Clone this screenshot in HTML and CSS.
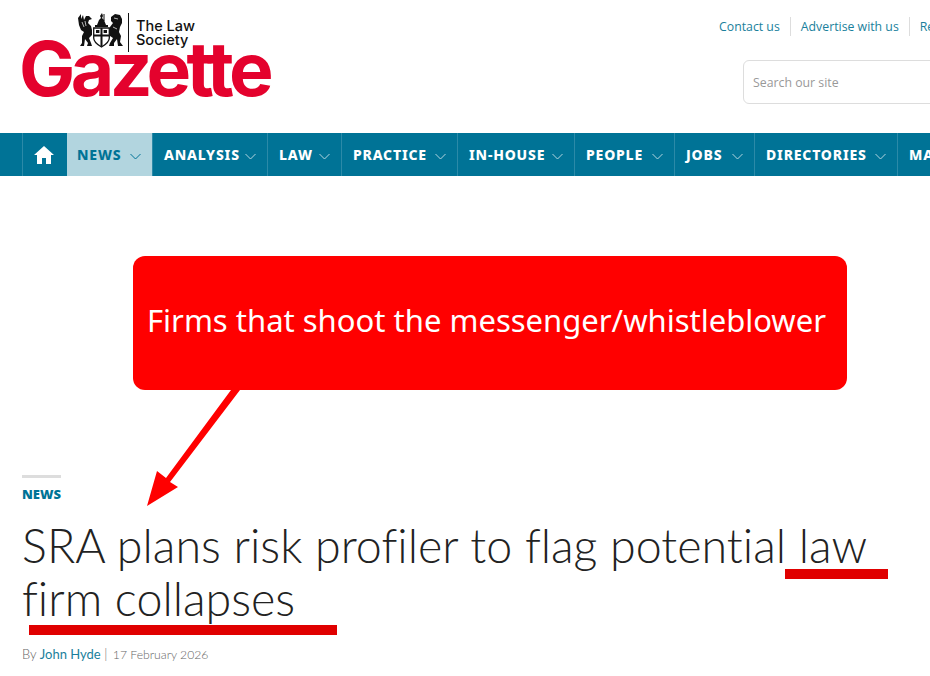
FILE: index.html
```html
<!DOCTYPE html>
<html lang="en">
<head>
    <meta charset="UTF-8">
    <title>SRA plans risk profiler to flag potential law firm collapses</title>
    <meta name="viewport" content="width=device-width, initial-scale=1.0">
    <link rel="stylesheet" href="styles.css">
</head>
<body>
    <div class="page">
        <header class="masthead">
            <a class="logo" href="#">
                <div class="logo-top">
                    <svg class="crest" width="46" height="36" viewBox="0 0 46 36" aria-hidden="true">
                        <!-- griffin -->
                        <path d="M0 5 L3 1 L3 6 L5 2 L6 7 L8 3 L11 3 L14 6 L11 7 L10 10 L13 13 L14 17 L14 22 L11 25 L13 30 L14 33 L9 33 L10 30 L7 26 L6 33 L2 33 L4 30 L4 23 L6 19 L3 17 L1 12 Z" fill="#111"/>
                        <path d="M4 9 L6 14 M7 8 L8 13" stroke="#fff" stroke-width=".7"/>
                        <!-- lion -->
                        <path d="M44 6 L42 2 L37 1 L33 4 L33 8 L35 10 L32 14 L31 18 L32 23 L35 25 L32 30 L31 33 L36 33 L36 30 L39 26 L40 33 L45 33 L42 29 L43 23 L41 19 L42 14 L44 10 Z" fill="#111"/>
                        <path d="M36 5 L40 6 M35 14 L39 16" stroke="#fff" stroke-width=".7"/>
                        <!-- figure on top -->
                        <path d="M24 0 L25 3 L24 5 L26 7 L28 12 L19 12 L21 7 L23 5 L22 3 Z" fill="#111"/>
                        <path d="M26 1 V8" stroke="#111"/>
                        <rect x="17" y="12" width="13" height="2" fill="#111"/>
                        <!-- shield -->
                        <path d="M15.7 15 H31.3 V25 C31.3 29 27 32 23.5 34 C20 32 15.7 29 15.7 25 Z" fill="#fff" stroke="#111" stroke-width="1.3"/>
                        <path d="M23.5 15 V33 M16 22.5 H31" stroke="#111" stroke-width="2"/>
                        <rect x="18" y="17" width="3.4" height="3" fill="#111"/>
                        <rect x="25.6" y="17" width="3.4" height="3" fill="#111"/>
                    </svg>
                    <span class="logo-rule"></span>
                    <span class="logo-society">The Law<br>Society</span>
                </div>
                <div class="logo-word">Gazette</div>
            </a>
            <div class="head-right">
                <ul class="top-links">
                    <li><a href="#">Contact us</a></li>
                    <li><a href="#">Advertise with us</a></li>
                    <li><a href="#">Register</a></li>
                </ul>
                <div class="search">Search our site</div>
            </div>
        </header>

        <nav class="mainnav">
            <a class="nav-home" href="#">
                <svg width="20" height="18" viewBox="0 0 20 18" aria-hidden="true">
                    <path d="M10 0 L20 9 H17 V18 H12 V12 H8 V18 H3 V9 H0 Z" fill="#fff"/>
                </svg>
            </a>
            <a class="nav-item active" href="#">NEWS <svg class="chev" width="11" height="7" viewBox="0 0 11 7"><path d="M.5 1 L5.5 6 L10.5 1" fill="none" stroke="currentColor"/></svg></a>
            <a class="nav-item" href="#">ANALYSIS <svg class="chev" width="11" height="7" viewBox="0 0 11 7"><path d="M.5 1 L5.5 6 L10.5 1" fill="none" stroke="currentColor"/></svg></a>
            <a class="nav-item" href="#">LAW <svg class="chev" width="11" height="7" viewBox="0 0 11 7"><path d="M.5 1 L5.5 6 L10.5 1" fill="none" stroke="currentColor"/></svg></a>
            <a class="nav-item" href="#">PRACTICE <svg class="chev" width="11" height="7" viewBox="0 0 11 7"><path d="M.5 1 L5.5 6 L10.5 1" fill="none" stroke="currentColor"/></svg></a>
            <a class="nav-item" href="#">IN-HOUSE <svg class="chev" width="11" height="7" viewBox="0 0 11 7"><path d="M.5 1 L5.5 6 L10.5 1" fill="none" stroke="currentColor"/></svg></a>
            <a class="nav-item" href="#">PEOPLE <svg class="chev" width="11" height="7" viewBox="0 0 11 7"><path d="M.5 1 L5.5 6 L10.5 1" fill="none" stroke="currentColor"/></svg></a>
            <a class="nav-item" href="#">JOBS <svg class="chev" width="11" height="7" viewBox="0 0 11 7"><path d="M.5 1 L5.5 6 L10.5 1" fill="none" stroke="currentColor"/></svg></a>
            <a class="nav-item" href="#">DIRECTORIES <svg class="chev" width="11" height="7" viewBox="0 0 11 7"><path d="M.5 1 L5.5 6 L10.5 1" fill="none" stroke="currentColor"/></svg></a>
            <a class="nav-item" href="#">MAGAZINE</a>
        </nav>

        <main class="article">
            <div class="kicker">NEWS</div>
            <h1 class="headline">SRA plans risk profiler to flag potential law firm collapses</h1>
            <p class="byline">By <a href="#">John Hyde</a> | <span class="date">17 February 2026</span></p>
        </main>
    </div>

    <!-- annotations pasted over the screenshot -->
    <div class="callout">Firms that shoot the messenger/whistleblower</div>
    <svg class="arrow" width="110" height="130" viewBox="0 0 110 130" aria-hidden="true">
        <path d="M85 10 L94 10 L24 102 L32 107 L1 126 L11 91 L20 98 Z" fill="#f00"/>
    </svg>
    <div class="mark mark-one"></div>
    <div class="mark mark-two"></div>
</body>
</html>
```

FILE: styles.css
```css
html, body { margin: 0; padding: 0; overflow: hidden; background: #fff; }
body { height: 676px; position: relative; font-family: "Open Sans", sans-serif; }
a { text-decoration: none; color: inherit; }
.page { width: 1180px; }

.masthead {
    height: 133px;
    padding-left: 22px;
    display: flex;
    justify-content: space-between;
    box-sizing: border-box;
}
.logo { display: block; width: 260px; padding-top: 12px; }
.logo-top { display: flex; align-items: flex-start; margin-left: 56px; height: 28px; position: relative; z-index: 1; }
.crest { margin-top: 1px; flex: none; }
.logo-rule { width: 1px; height: 39px; background: #111; margin: 1px 7px 0 4px; flex: none; }
.logo-society {
    font-family: Inter, sans-serif;
    font-size: 14.5px;
    line-height: 14px;
    font-weight: 500;
    color: #111;
    margin-top: 7px;
}
.logo-word {
    font-family: Inter, "Liberation Sans", sans-serif;
    font-weight: 700;
    font-size: 75px;
    line-height: 58px;
    letter-spacing: -4.6px;
    color: #e4022d;
    margin-left: -3px;
}

.head-right { width: 461px; flex: none; }
.top-links {
    list-style: none;
    margin: 17px 0 0;
    padding: 0;
    display: flex;
    font-size: 12.3px;
    line-height: 19px;
    color: #1a7f9c;
}
.top-links li { padding-right: 10px; margin-right: 10px; border-right: 1px solid #ddd; }
.top-links li:last-child { border-right: 0; }
.search {
    margin: 24px 0 0 24px;
    height: 44px;
    box-sizing: border-box;
    border: 1px solid #ddd;
    border-radius: 6px;
    padding: 0 9px;
    font-size: 12.3px;
    line-height: 43px;
    color: #999;
}

.mainnav {
    height: 43px;
    background: #007396;
    padding-left: 22px;
    display: grid;
    grid-template-columns: 45px 85px 115px 74px 116px 117px 100px 80px 143px 1fr;
}
.nav-home {
    border-left: 1px solid #2b8aa8;
    display: flex;
    align-items: center;
    justify-content: center;
    padding-right: 3px;
}
.nav-item {
    display: flex;
    align-items: center;
    padding: 0 11px;
    border-left: 1px solid #2b8aa8;
    font-family: "Noto Sans", sans-serif;
    font-size: 14px;
    font-weight: 800;
    letter-spacing: .8px;
    color: #fff;
    white-space: nowrap;
}
.nav-item.active { background: #b2d5df; color: #007396; border-left: 0; padding-left: 10px; }
.chev { color: #b2d5df; margin: 3px 0 0 auto; flex: none; }
.active .chev { color: #007396; }

.article { padding: 299px 0 0 22px; width: 880px; }
.kicker {
    width: 39px;
    border-top: 3px solid #ddd;
    padding-top: 8px;
    font-size: 13px;
    line-height: 16px;
    font-weight: 800;
    color: #007396;
}
.headline {
    margin: 17px 0 0;
    font-family: Lato, sans-serif;
    font-weight: 300;
    font-size: 46.6px;
    line-height: 53px;
    color: #222;
    font-variant-ligatures: none;
}
.byline {
    margin: 20px 0 0;
    font-family: Lato, sans-serif;
    font-weight: 300;
    font-size: 13px;
    line-height: 18px;
    color: #666;
}
.byline a { color: #1a7f9c; font-weight: 400; }
.date { font-size: 12.2px; margin-left: 2px; }

/* annotations */
.callout {
    position: absolute;
    left: 133px;
    top: 256px;
    width: 714px;
    height: 134px;
    border-radius: 12px;
    background: #f00;
    color: #fff;
    font-family: "Noto Sans", sans-serif;
    font-size: 31px;
    line-height: 128px;
    padding-left: 14px;
    box-sizing: border-box;
    white-space: nowrap;
}
.arrow { position: absolute; left: 146px; top: 380px; }
.mark { position: absolute; background: #e00000; height: 10px; }
.mark-one { left: 785px; top: 569px; width: 103px; }
.mark-two { left: 29px; top: 625px; width: 308px; }
```
